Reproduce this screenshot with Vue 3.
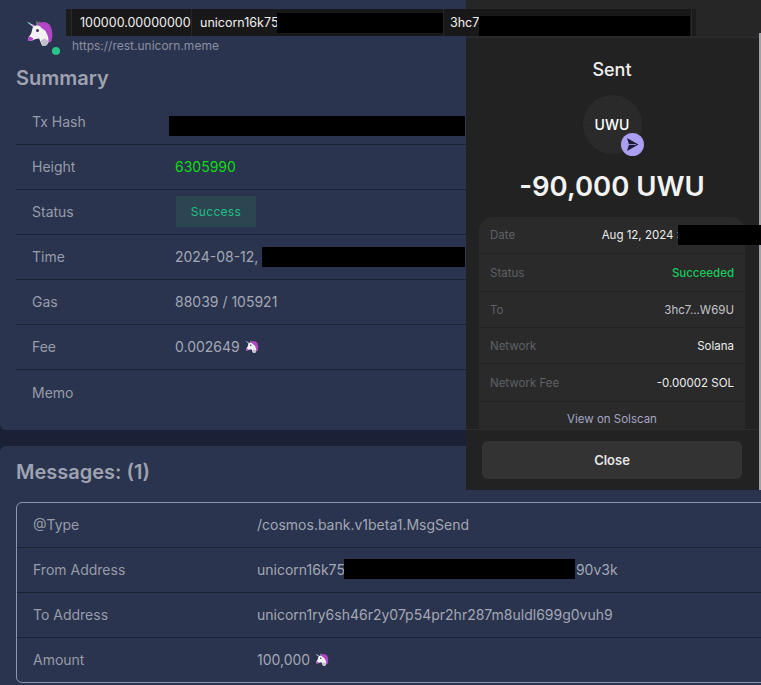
<script setup>
const summary = [
  { label: 'Height', value: '6305990', cls: 'green' },
  { label: 'Gas', value: '88039 / 105921' },
]
const panelRows = [
  { label: 'Status', value: 'Succeeded', cls: 'ok', h: 38 },
  { label: 'To', value: '3hc7...W69U', cls: 'soft', h: 36 },
  { label: 'Network', value: 'Solana', cls: '', h: 36 },
  { label: 'Network Fee', value: '-0.00002 SOL', cls: '', h: 38 },
]
</script>

<template>
  <svg class="defs" width="0" height="0" aria-hidden="true">
    <symbol id="uni" viewBox="24 18 30 30">
      <path d="M26.500 21.500 37 27l-1.500 2z" fill="#d8e4e6" />
      <path d="M28.500 22.800l2 1" stroke="#58c9a8" stroke-width="1.300" />
      <path d="M32 24.700l2 1.200" stroke="#e58ad0" stroke-width="1.300" />
      <path d="M36 26 36.500 20.500 38.500 23 40 21 41.500 26z" fill="#80788f" />
      <path d="M38 24C42 20.500 48 21.500 50.500 26 52.500 30 53 36 51.500 41 50.500 43 49 42.500 48.500 41L46 33 41 28z" fill="#b045c6" />
      <path d="M33 27C36 25 40 25 43 28 47 32 49 38 48.500 42 48 45 45 46.500 43 46 41 45 40.500 41 39 38.500 36 38.500 33 40.500 30 41 28 41 27.500 39.500 28.500 37.500 30 35 32 33 32 30z" fill="#f3f1f4" />
      <path d="M44 38.500C46.500 39 48.300 41 48.500 42 48 45 45 46.500 43 46 41.800 45.300 41.300 43 40.500 41z" fill="#c4c0cb" />
      <path d="M28.500 37C30 36.500 32 37.500 33.500 38.800 33 40 31.500 40.800 30 41 28 41 27.500 39.500 28.500 37z" fill="#b045c6" />
      <path d="M38.500 24.500C41 25 44 27.500 46 31L42 28.500z" fill="#b045c6" />
      <circle cx="37.500" cy="30.500" r="1.500" fill="#3c3550" />
    </symbol>
  </svg>

  <div class="page">
    <section class="card first">
      <header class="site">
        <div class="logo">
          <svg class="logo-art" viewBox="0 0 30 30"><use href="#uni" width="30" height="30" /></svg>
          <span class="dot"></span>
        </div>
        <span class="url">https://rest.unicorn.meme</span>
      </header>
      <h2 class="title">Summary</h2>
      <div class="table">
        <div class="row">
          <span class="lab">Tx Hash</span>
          <span class="val"><i class="redact hash"></i></span>
        </div>
        <div class="row">
          <span class="lab">{{ summary[0].label }}</span>
          <span class="val green">{{ summary[0].value }}</span>
        </div>
        <div class="row">
          <span class="lab">Status</span>
          <span class="val"><span class="badge">Success</span></span>
        </div>
        <div class="row">
          <span class="lab">Time</span>
          <span class="val">2024-08-12,<i class="redact time"></i></span>
        </div>
        <div class="row">
          <span class="lab">{{ summary[1].label }}</span>
          <span class="val">{{ summary[1].value }}</span>
        </div>
        <div class="row">
          <span class="lab">Fee</span>
          <span class="val">0.002649<svg class="mini" viewBox="0 0 30 30"><use href="#uni" width="30" height="30" /></svg></span>
        </div>
        <div class="row last">
          <span class="lab">Memo</span>
          <span class="val"></span>
        </div>
      </div>
    </section>

    <section class="card second">
      <h2 class="title msg">Messages: (1)</h2>
      <div class="box">
        <div class="mrow">
          <span class="lab">@Type</span>
          <span class="val">/cosmos.bank.v1beta1.MsgSend</span>
        </div>
        <div class="mrow">
          <span class="lab">From Address</span>
          <span class="val">unicorn16k75<i class="redact from"></i>90v3k</span>
        </div>
        <div class="mrow">
          <span class="lab">To Address</span>
          <span class="val">unicorn1ry6sh46r2y07p54pr2hr287m8uldl699g0vuh9</span>
        </div>
        <div class="mrow">
          <span class="lab">Amount</span>
          <span class="val">100,000<svg class="mini" viewBox="0 0 30 30"><use href="#uni" width="30" height="30" /></svg></span>
        </div>
      </div>
    </section>

    <aside class="panel">
      <div class="strip"></div>
      <div class="panel-body">
        <div class="sent">Sent</div>
        <div class="token">
          <span>UWU</span>
          <span class="send">
            <svg viewBox="0 0 23 23" width="23" height="23">
              <path d="M6 5 17.500 11.500 6 18 8 11.500z" fill="#1c1c38" />
              <path d="M8 11.500h7" stroke="#ab9ff2" stroke-width=".8" />
            </svg>
          </span>
        </div>
        <div class="amount">-90,000 UWU</div>
        <div class="details">
          <div class="drow date">
            <span class="dl">Date</span>
            <span class="dv">Aug 12, 2024 :</span>
          </div>
          <div v-for="r in panelRows" :key="r.label" class="drow" :style="{ height: r.h + 'px' }">
            <span class="dl">{{ r.label }}</span>
            <span class="dv" :class="r.cls">{{ r.value }}</span>
          </div>
          <div class="view">View on Solscan</div>
        </div>
      </div>
      <div class="foot">
        <div class="close">Close</div>
      </div>
      <span class="scroll"></span>
    </aside>

    <div class="date-redact"></div>

    <div class="txbar">
      <span class="edge"></span>
      <span class="seg amountseg">100000.00000000</span>
      <span class="seg fromseg">unicorn16k75<i class="redact barfrom"></i></span>
      <span class="seg toseg">3hc7<i class="redact barto"></i></span>
      <span class="edge end"></span>
    </div>
  </div>
</template>

<style>
html, body {
  margin: 0;
  background: #2a344e;
  overflow: hidden;
}
</style>

<style scoped>
.defs {
  position: absolute;
}
.page {
  position: relative;
  width: 761px;
  height: 685px;
  overflow: hidden;
  background: #1a2035;
  font-family: Inter, "Liberation Sans", sans-serif;
  font-size: 14px;
  color: #a3a7b5;
}
.card {
  width: 820px;
  background: #2a344e;
  box-sizing: border-box;
}
.first {
  height: 430px;
  border-radius: 0 0 6px 6px;
}
.second {
  height: 239px;
  margin-top: 16px;
  border-radius: 6px 6px 0 0;
}
.site {
  height: 62px;
  display: flex;
  box-sizing: border-box;
  padding: 18px 0 0 24px;
}
.logo {
  position: relative;
  width: 48px;
}
.logo-art {
  display: block;
  width: 30px;
  height: 30px;
}
.dot {
  position: absolute;
  left: 28px;
  top: 29px;
  width: 8px;
  height: 8px;
  border-radius: 50%;
  background: #27c485;
}
.url {
  margin-top: 20px;
  font-size: 12px;
  line-height: 15px;
  color: #8a8fa2;
}
.title {
  margin: 0;
  padding-left: 16px;
  height: 38px;
  font-size: 20px;
  line-height: 32px;
  font-weight: 600;
  color: #9ea2b1;
}
.table {
  padding-left: 16px;
}
.row {
  display: grid;
  grid-template-columns: 159px 1fr;
  align-items: center;
  height: 45px;
  box-sizing: border-box;
  padding-bottom: 1px;
  border-bottom: 1px solid #1b2233;
}
.row.last {
  border-bottom: 0;
}
.row .lab {
  padding-left: 16px;
}
.lab {
  color: #979baa;
}
.val {
  display: flex;
  align-items: center;
  white-space: nowrap;
}
.green {
  color: #0fdc12;
}
.badge {
  display: block;
  width: 80px;
  height: 31px;
  margin-left: 1px;
  line-height: 31px;
  text-align: center;
  font-size: 12px;
  letter-spacing: 0.3px;
  background: #2b4650;
  color: #24bd86;
}
.redact {
  display: block;
  flex: none;
  height: 20px;
  background: #000;
}
.hash {
  width: 296px;
  margin-left: -6px;
  margin-top: 8px;
}
.time {
  width: 203px;
  margin-left: 4px;
}
.from {
  width: 231px;
  margin-left: -1px;
  margin-right: 1px;
  margin-top: -1px;
}
.mini {
  width: 15px;
  height: 15px;
  margin-left: 4px;
  flex: none;
}
.title.msg {
  height: 56px;
  padding-top: 10px;
  box-sizing: border-box;
}
.box {
  width: 790px;
  margin-left: 16px;
  height: 181px;
  box-sizing: border-box;
  border: 1px solid #8d97b0;
  border-radius: 6px;
}
.mrow {
  display: grid;
  grid-template-columns: 240px 1fr;
  align-items: center;
  height: 45px;
  box-sizing: border-box;
  border-bottom: 1px solid #1b2233;
  padding-bottom: 1px;
}
.mrow:last-child {
  border-bottom: 0;
  height: 44px;
}
.mrow .lab {
  padding-left: 16px;
}
.panel {
  position: absolute;
  left: 466px;
  top: 0;
  width: 295px;
  height: 490px;
  padding-right: 3px;
  background: #222222;
  color: #fff;
  display: flex;
  flex-direction: column;
  box-sizing: border-box;
}
.strip {
  flex: none;
  height: 38px;
  background: #262626;
  border-bottom: 2px solid #2b2b2b;
  box-sizing: border-box;
  margin-right: -3px;
}
.scroll {
  position: absolute;
  right: 0;
  top: 33px;
  bottom: 0;
  width: 2px;
  background: #a0a0a6;
}
.panel-body {
  flex: 1;
  min-height: 0;
  overflow: hidden;
  padding: 0 13px;
  display: flex;
  flex-direction: column;
  align-items: center;
}
.sent {
  margin-top: 20px;
  height: 24px;
  line-height: 24px;
  font-size: 18px;
  font-weight: 500;
  color: #efefef;
}
.token {
  position: relative;
  margin-top: 13px;
  width: 59px;
  height: 59px;
  border-radius: 50%;
  background-color: #2a2a2a;
  background-image: radial-gradient(#303030 0.6px, transparent 0.8px);
  background-size: 5px 5px;
  display: flex;
  align-items: center;
  justify-content: center;
  font-size: 14px;
  font-weight: 500;
  flex: none;
}
.send {
  position: absolute;
  left: 38px;
  top: 38px;
  width: 23px;
  height: 23px;
  border-radius: 50%;
  background: #ab9ff2;
}
.send svg {
  display: block;
}
.amount {
  margin-top: 13px;
  height: 38px;
  line-height: 38px;
  font-size: 27.500px;
  font-weight: 600;
  color: #f2f2f2;
  white-space: nowrap;
}
.details {
  margin-top: 12px;
  width: 266px;
  flex: none;
  background: #2a2a2a;
  border-radius: 14px 14px 0 0;
  box-sizing: border-box;
}
.drow {
  display: flex;
  justify-content: space-between;
  align-items: center;
  padding: 0 11px;
  box-sizing: border-box;
  border-bottom: 1px solid #222222;
  font-size: 11.500px;
}
.drow.date {
  height: 37px;
}
.dl {
  color: #5f6066;
}
.dv {
  color: #ededed;
  white-space: nowrap;
}
.date .dv {
  margin-right: 54px;
}
.dv.ok {
  color: #19c95c;
  font-weight: 500;
}
.dv.soft {
  color: #c4c4cc;
}
.view {
  text-align: center;
  font-size: 11.500px;
  line-height: 34px;
  height: 34px;
  color: #a6a4c4;
}
.foot {
  flex: none;
  height: 61px;
  box-sizing: border-box;
  padding: 11px 16px 0;
  background: #222222;
  border-top: 1px solid #2d2d2d;
}
.close {
  height: 38px;
  line-height: 38px;
  text-align: center;
  border-radius: 6px;
  background: #333333;
  font-size: 13px;
  font-weight: 600;
  color: #e6e6e6;
}
.date-redact {
  position: absolute;
  left: 678px;
  top: 225px;
  width: 83px;
  height: 20px;
  background: #000;
}
.txbar {
  position: absolute;
  left: 66px;
  top: 9px;
  height: 27px;
  display: flex;
  background: #181818;
  color: #f0f0f0;
  font-size: 12.500px;
  line-height: 27px;
  white-space: nowrap;
}
.edge {
  width: 5px;
  background: #1c1c1c;
  border-right: 1px solid #2a2a2a;
}
.edge.end {
  width: 4px;
  border-right: 0;
  border-left: 1px solid #2a2a2a;
}
.seg {
  display: flex;
  box-sizing: border-box;
  border-right: 1px solid #262626;
}
.amountseg {
  width: 120px;
  padding-left: 8px;
}
.fromseg {
  width: 252px;
  padding-left: 8px;
}
.toseg {
  width: 247px;
  padding-left: 6px;
  border-right: 0;
}
.barfrom {
  width: 166px;
  margin-top: 4px;
  margin-left: -1px;
}
.barto {
  width: 211px;
  margin-top: 7px;
}
</style>
